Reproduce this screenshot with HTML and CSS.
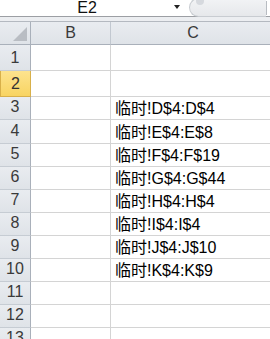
FILE: index.html
```html
<!DOCTYPE html>
<html lang="zh">
<head>
    <meta charset="UTF-8">
    <title>Sheet</title>
    <link rel="stylesheet" href="styles.css">
</head>
<body>
    <div class="topbar">
        <div class="namebox">E2</div>
        <div class="arrow"></div>
        <div class="pill"><span class="knob"></span></div>
        <div class="edge"></div>
    </div>
    <div class="strip"></div>
    <div class="sheet">
        <div class="corner"><span class="tri"></span></div>
        <div class="colhead">B</div>
        <div class="colhead">C</div>

        <div class="rowhead">1</div><div class="cell"></div><div class="cell"></div>
        <div class="rowhead sel">2</div><div class="cell"></div><div class="cell"></div>
        <div class="rowhead">3</div><div class="cell"></div><div class="cell">临时!D$4:D$4</div>
        <div class="rowhead">4</div><div class="cell"></div><div class="cell">临时!E$4:E$8</div>
        <div class="rowhead">5</div><div class="cell"></div><div class="cell">临时!F$4:F$19</div>
        <div class="rowhead">6</div><div class="cell"></div><div class="cell">临时!G$4:G$44</div>
        <div class="rowhead">7</div><div class="cell"></div><div class="cell">临时!H$4:H$4</div>
        <div class="rowhead">8</div><div class="cell"></div><div class="cell">临时!I$4:I$4</div>
        <div class="rowhead">9</div><div class="cell"></div><div class="cell">临时!J$4:J$10</div>
        <div class="rowhead">10</div><div class="cell"></div><div class="cell">临时!K$4:K$9</div>
        <div class="rowhead">11</div><div class="cell"></div><div class="cell"></div>
        <div class="rowhead">12</div><div class="cell"></div><div class="cell"></div>
        <div class="rowhead">13</div><div class="cell"></div><div class="cell"></div>
    </div>
</body>
</html>
```

FILE: styles.css
```css
body {
    margin: 0;
    background: white;
    font-family: "Liberation Sans", "Noto Sans CJK SC", sans-serif;
    width: 270px;
    height: 339px;
    overflow: hidden;
}
.topbar {
    height: 16px;
    display: flex;
    align-items: center;
    border-bottom: 1px solid #9c9fa4;
    background: white;
}
.namebox {
    width: 174px;
    text-align: center;
    font-size: 16px;
    line-height: 16px;
    color: #111;
}
.arrow {
    width: 0;
    height: 0;
    border-left: 3px solid transparent;
    border-right: 3px solid transparent;
    border-top: 4px solid #222;
    margin-top: -2px;
}
.pill {
    margin-left: 9px;
    flex: 1;
    height: 17px;
    margin-top: -2px;
    border: 1px solid #c8ccd1;
    border-right: none;
    border-radius: 10px 0 0 10px;
    background: linear-gradient(#f2f3f5, #e6e8eb);
    position: relative;
}
.knob {
    position: absolute;
    left: 6px;
    top: 1px;
    width: 8px;
    height: 5px;
    border-radius: 0 0 4px 4px;
    background: #d6d9de;
}
.edge {
    width: 3px;
    height: 14px;
    border-left: 1px solid #b8bcc2;
    background: white;
}
.strip {
    height: 4px;
    background: #eceef1;
    border-bottom: 1px solid #b4b9c0;
}
.sheet {
    display: grid;
    grid-template-columns: 31px 80px 165px;
    grid-template-rows: 23px 26px 26px 23px 24px 23px 23px 23px 23px 23px 23px 23px 23px 23px;
}
.corner, .colhead, .rowhead {
    background: linear-gradient(#e9ecf0, #dfe3e8);
    color: #3a3a3a;
    box-sizing: border-box;
}
.corner {
    border-right: 1px solid #a9b0ba;
    border-bottom: 1px solid #a9b0ba;
    position: relative;
}
.tri {
    position: absolute;
    right: 3px;
    bottom: 3px;
    width: 0;
    height: 0;
    border-left: 14px solid transparent;
    border-bottom: 14px solid #b9bdc3;
}
.colhead {
    border-right: 1px solid #c2c8d0;
    border-bottom: 1px solid #a9b0ba;
    text-align: center;
    font-size: 16px;
    line-height: 22px;
}
.rowhead {
    border-right: 1px solid #a9b0ba;
    border-bottom: 1px solid #c6ccd3;
    font-size: 16px;
    line-height: 24px;
    display: flex;
    align-items: flex-end;
    justify-content: center;
}
.rowhead.sel {
    background: linear-gradient(#fde38e, #f8d462);
    border: 1px solid #d8b04a;
    border-top: none;
    color: #333;
}
.cell {
    border-right: 1px solid #d4d4d4;
    border-bottom: 1px solid #d4d4d4;
    box-sizing: border-box;
    font-size: 16px;
    color: #000;
    padding-left: 4px;
    display: flex;
    align-items: flex-end;
    line-height: 21px;
    white-space: nowrap;
}
```
